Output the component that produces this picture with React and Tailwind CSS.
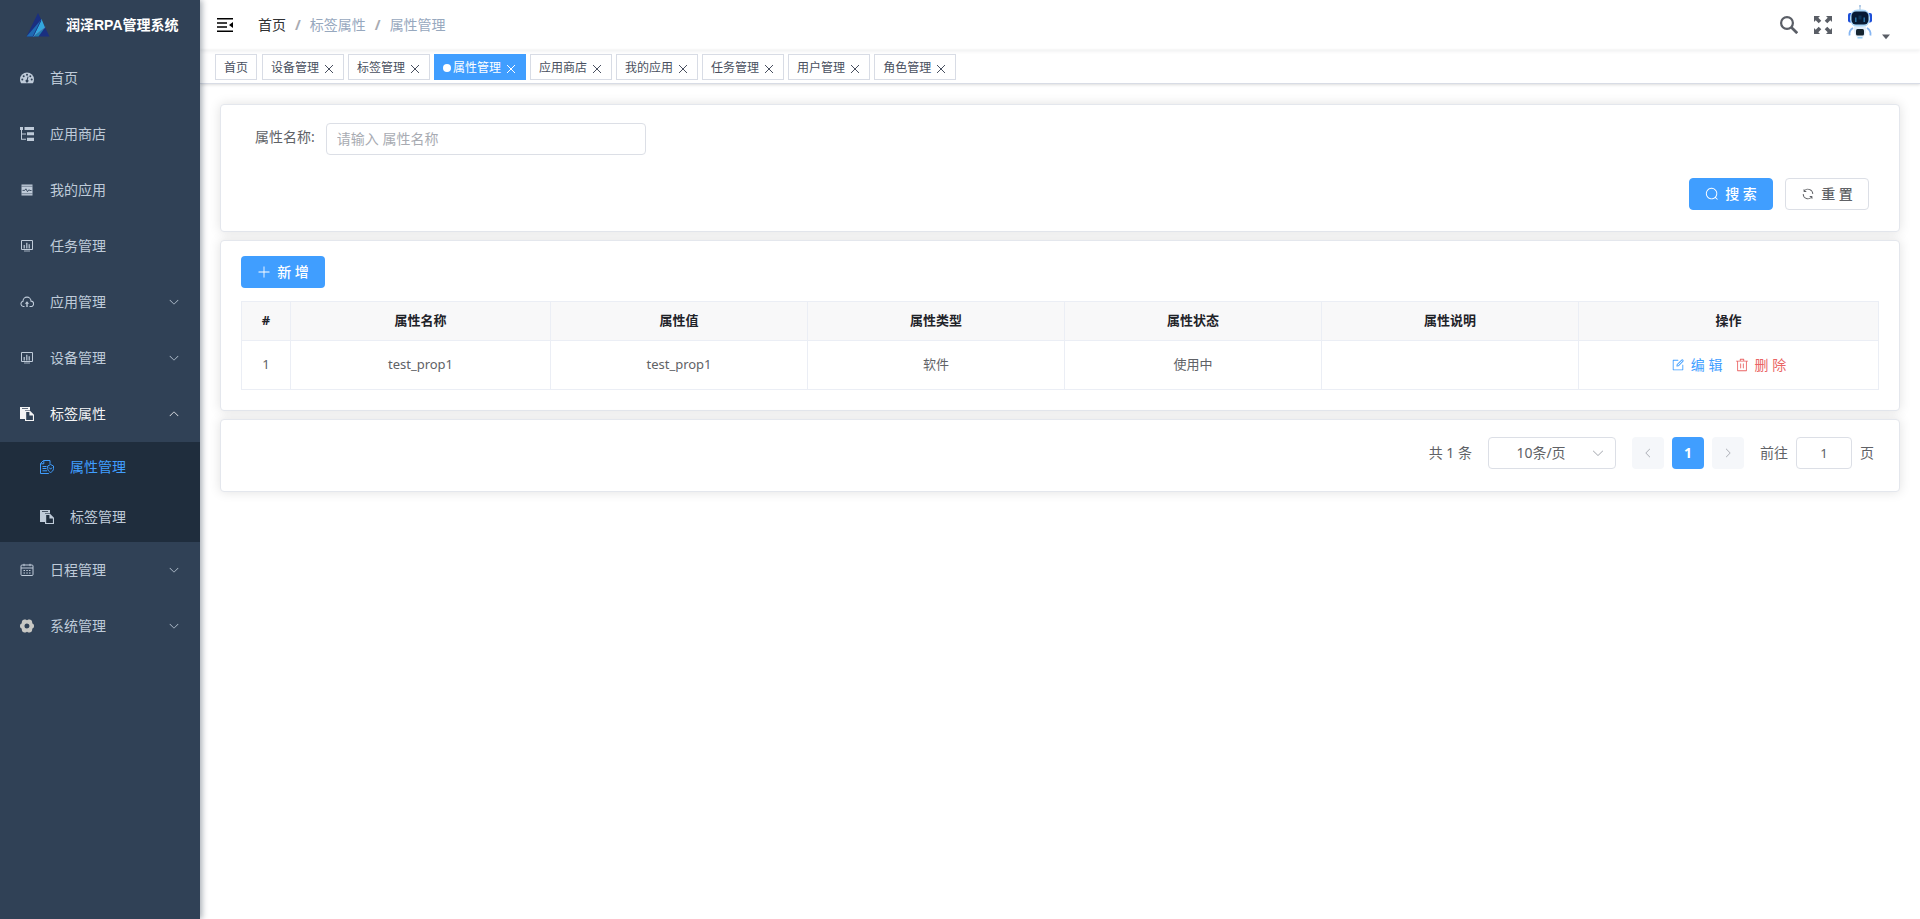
import React from "react";

const BODY = "font-['Noto_Sans','Noto_Sans_CJK_SC',sans-serif]";

function Glyph({ d, className }) {
  return (
    <svg viewBox="0 0 1024 1024" fill="currentColor" className={className} aria-hidden="true">
      {d.map((p) => (
        <path key={p} d={p} />
      ))}
    </svg>
  );
}

const ARROW_DOWN = [
  "M831.872 340.864 512 652.672 192.128 340.864a30.592 30.592 0 0 0-42.752 0 29.12 29.12 0 0 0 0 41.6L489.664 714.24a32 32 0 0 0 44.672 0l340.288-331.712a29.12 29.12 0 0 0 0-41.728 30.592 30.592 0 0 0-42.752 0z",
];
const SEARCH = [
  "m795.904 750.72 124.992 124.928a32 32 0 0 1-45.248 45.248L750.656 795.904a416 416 0 1 1 45.248-45.248zM480 832a352 352 0 1 0 0-704 352 352 0 0 0 0 704z",
];
const REFRESH = [
  "M771.776 794.88A384 384 0 0 1 128 512h64a320 320 0 0 0 555.712 216.448H654.72a32 32 0 1 1 0-64h149.056a32 32 0 0 1 32 32v148.928a32 32 0 1 1-64 0v-50.56zM276.288 295.616h92.992a32 32 0 0 1 0 64H220.16a32 32 0 0 1-32-32V178.56a32 32 0 0 1 64 0v50.56A384 384 0 0 1 896.128 512h-64a320 320 0 0 0-555.776-216.384z",
];
const PLUS = [
  "M480 480V128a32 32 0 0 1 64 0v352h352a32 32 0 1 1 0 64H544v352a32 32 0 1 1-64 0V544H128a32 32 0 0 1 0-64h352z",
];
const TRASH = [
  "M160 256H96a32 32 0 0 1 0-64h256V95.936a32 32 0 0 1 32-32h256a32 32 0 0 1 32 32V192h256a32 32 0 1 1 0 64h-64v672a32 32 0 0 1-32 32H192a32 32 0 0 1-32-32V256zm448-64v-64H416v64h192zM224 896h576V256H224v640zm192-128a32 32 0 0 1-32-32V416a32 32 0 0 1 64 0v320a32 32 0 0 1-32 32zm192 0a32 32 0 0 1-32-32V416a32 32 0 0 1 64 0v320a32 32 0 0 1-32 32z",
];
const EDIT = [
  "M832 512a32 32 0 1 1 64 0v352a32 32 0 0 1-32 32H160a32 32 0 0 1-32-32V160a32 32 0 0 1 32-32h352a32 32 0 0 1 0 64H192v640h640V512z",
  "m469.952 554.24 52.8-7.552L847.104 222.4a32 32 0 1 0-45.248-45.248L477.44 501.44l-7.552 52.8zm422.4-422.4a96 96 0 0 1 0 135.808l-331.84 331.84a32 32 0 0 1-18.112 9.088L436.8 623.68a32 32 0 0 1-36.224-36.224l15.104-105.6a32 32 0 0 1 9.024-18.112l331.904-331.84a96 96 0 0 1 135.744 0z",
];

const icons = {
  dashboard: (
    <svg viewBox="0 0 14 14" className="size-3.5 shrink-0" aria-hidden="true">
      <path d="M0 8.4a7 6.9 0 0 1 14 0c0 1.5-.4 2.800-1.100 3.900H1.100C.4 11.200 0 9.900 0 8.400z" fill="currentColor" />
      <g fill="#304156">
        <circle cx="2.300" cy="8.600" r="1" />
        <circle cx="3.700" cy="5.300" r="1" />
        <circle cx="7" cy="3.700" r="1" />
        <circle cx="10.300" cy="5.300" r="1" />
        <circle cx="11.700" cy="8.600" r="1" />
        <path d="M7.600 5.500l.9.200-.7 3a1.500 1.500 0 1 1-1-.2z" />
      </g>
    </svg>
  ),
  tree: (
    <svg viewBox="0 0 14 14" fill="currentColor" className="size-3.5 shrink-0" aria-hidden="true">
      <path d="M0 0h3v3H2v3.500h4v1H2v4.300h4v1H1V3H0zM4.500 0H14v3H4.500zM7 5.300h7v3H7zM7 10.700h7v3.200H7z" />
    </svg>
  ),
  monitor: (
    <svg viewBox="0 0 14 14" className="size-3.5 shrink-0" aria-hidden="true">
      <path d="M1.500 1.500h11v11h-11z" fill="currentColor" />
      <path d="M1.500 3.300h11M1.500 10.700h11" stroke="#304156" strokeWidth=".5" />
      <path d="M2.500 7.400h2.200l1.200-1.600 1.600 2.900 1.400-2 .9.800h1.700" fill="none" stroke="#304156" strokeWidth=".9" />
    </svg>
  ),
  screen: (
    <svg viewBox="0 0 14 14" className="size-3.5 shrink-0" aria-hidden="true">
      <path d="M1.500 1.500h11v9h-11z" fill="none" stroke="currentColor" strokeWidth="1" />
      <path d="M3.500 6h1.500v3.500H3.500zM6 3.800h1.500v5.700H6zM8.500 5.200H10v4.300H8.500zM4 11.500h6v1H4z" fill="currentColor" opacity=".8" />
    </svg>
  ),
  cloud: (
    <svg viewBox="0 0 14 14" fill="none" stroke="currentColor" strokeWidth="1.100" className="size-3.5 shrink-0" aria-hidden="true">
      <path d="M4.500 11.500H3.300A2.700 2.700 0 0 1 3 6.200a4 4 0 0 1 8-.1 2.700 2.700 0 0 1-.2 5.400H9.500" />
      <path d="M7 12V7.500" strokeWidth="1.400" />
      <path d="M4.900 8.700 7 6.300l2.100 2.400z" fill="currentColor" stroke="none" />
    </svg>
  ),
  copy: (
    <svg viewBox="0 0 14 14" fill="currentColor" className="size-3.5 shrink-0" aria-hidden="true">
      <path fillRule="evenodd" d="M0 0h10v3.200H5V12H0zM2 1v.8h6V1z" />
      <path fillRule="evenodd" d="M5 3.800h5L14 7.800V14H5zm1.200 1.100v8H12.900V8.600H9.400V4.900z" />
    </svg>
  ),
  docCheck: (
    <svg viewBox="0 0 14 14" fill="none" stroke="currentColor" strokeWidth="1" className="size-3.5 shrink-0" aria-hidden="true">
      <path d="M10 3.800V.5H3.500L.5 3.500v10h8.300M3.800.5v3.300H.5M2.500 6.500h4M2.500 8.500h4M2.500 10.800h4.500" />
      <path d="M10.600 4.500 13.500 6v2.600c0 1.800-1.200 3-2.900 3.900-1.700-.9-2.900-2.100-2.900-3.900V6z" />
      <path d="m9.300 7.600 1.300 1.600 1.300-1.600" />
    </svg>
  ),
  calendar: (
    <svg viewBox="0 0 14 14" fill="none" stroke="currentColor" strokeWidth="1" className="size-3.5 shrink-0" aria-hidden="true">
      <rect x="1" y="2" width="12" height="10.500" rx="1" />
      <path d="M1 5h12M4 .8v2.400M10 .8v2.400M3.500 7.500h1.500M6.300 7.500h1.500M9 7.500h1.500M3.500 10h1.500M6.300 10h1.500M9 10h1.500" />
    </svg>
  ),
  gear: (
    <svg viewBox="0 0 14 14" className="size-3.5 shrink-0" aria-hidden="true">
      <path
        fill="#c8c8c4"
        fillRule="evenodd"
        d="M4 .4h1.700L7 1.200 8.300.4H10l1.700 1.100.5 1.500v1.300l1.400.9.400 1.200v1.200l-.4 1.200-1.400.9V11l-.5 1.500-1.700 1.100H8.300L7 12.800l-1.300.8H4l-1.700-1.100L1.800 11V9.700l-1.400-.9L0 7.600V6.400l.4-1.200 1.400-.9V3l.5-1.500zM7 4.500a2.500 2.500 0 1 0 0 5 2.500 2.500 0 0 0 0-5z"
      />
    </svg>
  ),
};

const topMenu = [
  { label: "首页", icon: "dashboard" },
  { label: "应用商店", icon: "tree" },
  { label: "我的应用", icon: "monitor" },
  { label: "任务管理", icon: "screen" },
  { label: "应用管理", icon: "cloud", group: true },
  { label: "设备管理", icon: "screen", group: true },
  {
    label: "标签属性",
    icon: "copy",
    group: true,
    children: [
      { label: "属性管理", icon: "docCheck", active: true },
      { label: "标签管理", icon: "copy" },
    ],
  },
  { label: "日程管理", icon: "calendar", group: true },
  { label: "系统管理", icon: "gear", group: true },
];

function MenuRow({ item }) {
  const row = "flex h-14 w-full items-center gap-4 px-5 text-left text-sm";
  if (!item.group) {
    return (
      <a href="#" className={`${row} text-[#bfcbd9]`}>
        {icons[item.icon]}
        <span>{item.label}</span>
      </a>
    );
  }
  return (
    <button type="button" aria-expanded={Boolean(item.children)} className={`${row} ${item.children ? "text-[#f4f4f5]" : "text-[#bfcbd9]"}`}>
      {icons[item.icon]}
      <span className="flex-1">{item.label}</span>
      <Glyph d={ARROW_DOWN} className={item.children ? "size-3 rotate-180" : "size-3"} />
    </button>
  );
}

function Sidebar() {
  return (
    <aside className="z-10 flex w-[200px] shrink-0 flex-col bg-[#304156] shadow-[2px_0_6px_rgba(0,21,41,0.35)]">
      <a href="#" className="flex h-[50px] items-center gap-4 pl-[26px]">
        <svg viewBox="0 0 24 26" className="h-[26px] w-6" aria-hidden="true">
          <path d="M12 1 23.500 24.500H.5z" fill="#1a2f80" />
          <path d="M14.500 8.500.5 24.500H8z" fill="#1f6bb3" />
          <path d="M15.500 7 19 15.500 7.500 24.500z" fill="#33a8de" />
          <path d="M19 15.500 7.500 24.500h5z" fill="#1f7fb0" />
          <path d="M19.300 15.200 7 24.500" stroke="#5d88b8" strokeWidth=".7" />
          <path d="M15 8.500 7 24.500" stroke="#1b3b87" strokeWidth=".9" />
        </svg>
        <h1 className="font-['Liberation_Sans','Noto_Sans_CJK_SC',sans-serif] text-sm font-bold whitespace-nowrap text-white">润泽RPA管理系统</h1>
      </a>
      <nav>
        <ul>
          {topMenu.map((item) => (
            <li key={item.label}>
              <MenuRow item={item} />
              {item.children && (
                <ul className="bg-[#1f2d3d]">
                  {item.children.map((c) => (
                    <li key={c.label}>
                      <a href="#" className={`flex h-[50px] items-center gap-4 pl-10 text-sm ${c.active ? "text-[#409eff]" : "text-[#bfcbd9]"}`}>
                        {icons[c.icon]}
                        <span>{c.label}</span>
                      </a>
                    </li>
                  ))}
                </ul>
              )}
            </li>
          ))}
        </ul>
      </nav>
    </aside>
  );
}

function Robot() {
  return (
    <svg viewBox="0 0 28 36" className="h-9 w-7" aria-hidden="true">
      <path d="M14 1v5" stroke="#9fb8d4" strokeWidth="1" />
      <circle cx="14" cy="2" r="1" fill="#a9c6e6" />
      <rect x="2" y="9" width="5" height="9.500" rx="2" fill="#1d4fd8" />
      <rect x="21" y="9" width="5" height="9.500" rx="2" fill="#1d4fd8" />
      <rect x="4" y="5.500" width="20" height="17.500" rx="7.500" fill="#a9d6f8" />
      <rect x="5.500" y="7.500" width="17" height="13" rx="4.500" fill="#071a33" />
      <path d="M9.800 13.500v4.500M18.200 13.500v4.500" stroke="#2f80b5" strokeWidth="1.300" />
      <path d="M12.500 11.500h3v4h-3z" fill="#0d3454" />
      <path d="M7 24c-2.700 1.500-3.900 4.500-3.400 7.500M21 24c2.700 1.500 3.900 4.500 3.400 7.500" fill="none" stroke="#86b6f2" strokeWidth="1.800" />
      <path d="M8 22.500h12c1 6-1.500 11.500-6 11.500s-7-5.500-6-11.500z" fill="#e3effb" />
      <rect x="10" y="25" width="8" height="6.500" rx="1.500" fill="#16242e" />
      <path d="M11.500 33.800h5" stroke="#8cc8f2" strokeWidth="1.400" />
    </svg>
  );
}

function Navbar() {
  return (
    <header className="flex h-[50px] items-center pr-[29px] pl-[17px] shadow-[0_1px_4px_rgba(0,21,41,0.08)]">
      <button type="button" aria-label="折叠菜单" className="text-black">
        <svg viewBox="0 0 16 14" className="h-3.5 w-4" fill="currentColor" aria-hidden="true">
          <path d="M0 0h16v1.500H0zM0 4.300h10v1.400H0zM0 8.300h10v1.400H0zM0 12.500h16V14H0zM16 3.900v6.200L12 7z" />
        </svg>
      </button>
      <nav aria-label="breadcrumb" className="ml-[25px] flex-1">
        <ol className="flex items-center text-sm text-[#97a8be]">
          <li>
            <a href="#" className="text-[#303133]">首页</a>
          </li>
          <li className="mx-[9px] font-bold text-[#a8abb2]" aria-hidden="true">/</li>
          <li>标签属性</li>
          <li className="mx-[9px] font-bold text-[#a8abb2]" aria-hidden="true">/</li>
          <li>属性管理</li>
        </ol>
      </nav>
      <div className="flex items-center text-[#5a5e66]">
        <button type="button" aria-label="搜索菜单" className="mr-4">
          <svg viewBox="0 0 18 18" className="size-[18px]" fill="none" stroke="currentColor" aria-hidden="true">
            <circle cx="7" cy="7" r="5.900" strokeWidth="2.200" />
            <path d="m11.500 11.500 5.700 5.700" strokeWidth="2.700" />
          </svg>
        </button>
        <button type="button" aria-label="全屏" className="mr-3.5">
          <svg viewBox="0 0 18 18" className="size-[18px]" fill="currentColor" aria-hidden="true">
            <path d="M0 0h6L4.300 1.700 7.300 4.700 4.700 7.300 1.700 4.300 0 6zM18 0v6l-1.700-1.700-3 3-2.600-2.600 3-3L12 0zM0 18v-6l1.700 1.700 3-3 2.600 2.600-3 3L6 18zM18 18h-6l1.700-1.700-3-3 2.600-2.600 3 3L18 12z" />
          </svg>
        </button>
        <button type="button" aria-label="用户菜单" className="flex items-end gap-[7px] pb-1.5">
          <Robot />
          <svg viewBox="0 0 10 6" className="h-1.5 w-2.5" fill="currentColor" aria-hidden="true">
            <path d="M1 .5h8L5 5.300z" />
          </svg>
        </button>
      </div>
    </header>
  );
}

const tags = ["首页", "设备管理", "标签管理", "属性管理", "应用商店", "我的应用", "任务管理", "用户管理", "角色管理"];

function TagsBar() {
  return (
    <nav aria-label="已打开页面" className="flex h-[34px] items-center gap-1 border-b border-[#d8dce5] pl-[15px] shadow-[0_1px_3px_rgba(0,0,0,0.12),0_0_3px_rgba(0,0,0,0.04)]">
      {tags.map((t, i) => {
        const active = t === "属性管理";
        return (
          <span
            key={t}
            className={`flex h-[26px] items-center border px-2 pt-0.5 text-xs first:mr-px ${active ? "border-[#409eff] bg-[#409eff] text-white" : "border-[#d8dce5] text-[#495060]"}`}
          >
            {active && <i className="mr-0.5 size-2 rounded-full bg-white" />}
            <a href="#">{t}</a>
            {i > 0 && (
              <button type="button" aria-label={`关闭${t}`} className="ml-1 pt-0.5">
                <svg viewBox="0 0 12 12" className="size-3" fill="none" stroke="currentColor" strokeWidth="1" aria-hidden="true">
                  <path d="m2 2 8 8M10 2l-8 8" />
                </svg>
              </button>
            )}
          </span>
        );
      })}
    </nav>
  );
}

const CARD = "rounded border border-[#e4e7ed] bg-white shadow-[0_0_12px_rgba(0,0,0,0.12)]";

function SearchCard() {
  return (
    <section className={`${CARD} pt-[18px] pr-[30px] pb-[21px] pl-[34px] text-[#606266]`}>
      <form onSubmit={(e) => e.preventDefault()}>
        <div className="flex gap-[11px]">
          <label htmlFor="prop-name" className="h-7 text-sm leading-7">属性名称:</label>
          <input
            id="prop-name"
            type="text"
            placeholder="请输入 属性名称"
            className="h-8 w-80 rounded border border-[#dcdfe6] px-2.5 pb-0.5 text-sm outline-none placeholder:text-[#a8abb2]"
          />
        </div>
        <div className="mt-[23px] flex justify-end gap-3">
          <button type="submit" className="flex h-8 min-w-21 items-center justify-center gap-1.5 rounded border border-[#409eff] bg-[#409eff] px-[15px] text-sm font-medium text-white">
            <Glyph d={SEARCH} className="size-3.5" />
            搜 索
          </button>
          <button type="reset" className="flex h-8 min-w-21 items-center justify-center gap-1.5 rounded border border-[#dcdfe6] bg-white px-[15px] text-sm font-medium">
            <Glyph d={REFRESH} className="size-3.5" />
            重 置
          </button>
        </div>
      </form>
    </section>
  );
}

const headers = ["#", "属性名称", "属性值", "属性类型", "属性状态", "属性说明", "操作"];
const rows = [["1", "test_prop1", "test_prop1", "软件", "使用中", ""]];

function TableCard() {
  return (
    <section className={`${CARD} px-5 pt-[15px] pb-5`}>
      <button type="button" className="flex h-8 min-w-21 items-center justify-center gap-1.5 rounded bg-[#409eff] px-[15px] text-sm font-medium text-white">
        <Glyph d={PLUS} className="size-3.5" />
        新 增
      </button>
      <table className="mt-[13px] w-full table-fixed border-collapse text-center text-[13px] text-[#606266]">
        <colgroup>
          <col className="w-[49px]" />
          <col className="w-[260px]" />
          <col />
          <col />
          <col />
          <col />
          <col className="w-[300px]" />
        </colgroup>
        <thead>
          <tr className="h-[39px] bg-[#f8f8f9] text-[#1f2329]">
            {headers.map((h) => (
              <th key={h} scope="col" className="border border-[#ebeef5] font-bold">{h}</th>
            ))}
          </tr>
        </thead>
        <tbody>
          {rows.map((r) => (
            <tr key={r[0]} className="h-[49px]">
              {r.map((c, i) => (
                <td key={i} className="border border-[#ebeef5]">{c}</td>
              ))}
              <td className="border border-[#ebeef5]">
                <div className="flex justify-center gap-3 text-sm">
                  <button type="button" className="flex items-center gap-1.5 text-[#409eff]">
                    <Glyph d={EDIT} className="size-3.5" />
                    编 辑
                  </button>
                  <button type="button" className="flex items-center gap-1.5 text-[#ea6464]">
                    <Glyph d={TRASH} className="size-3.5" />
                    删 除
                  </button>
                </div>
              </td>
            </tr>
          ))}
        </tbody>
      </table>
    </section>
  );
}

function Pagination() {
  return (
    <section className={`${CARD} flex items-center justify-end pt-[17px] pr-[25px] pb-[22px] text-sm text-[#606266]`}>
      <span className="mr-4">共 1 条</span>
      <div className="relative mr-4">
        <select aria-label="每页条数" className="h-8 w-32 appearance-none rounded border border-[#dcdfe6] bg-white pr-[34px] pl-3 text-center [text-align-last:center]">
          <option>10条/页</option>
          <option>20条/页</option>
          <option>50条/页</option>
        </select>
        <Glyph d={ARROW_DOWN} className="pointer-events-none absolute top-[9px] right-[11px] size-3.5 text-[#a8abb2]" />
      </div>
      <div className="flex gap-2">
        <button type="button" aria-label="上一页" disabled className="grid size-8 place-items-center rounded-sm bg-[#f5f7fa] text-[#a8abb2]">
          <Glyph d={ARROW_DOWN} className="size-3 rotate-90" />
        </button>
        <button type="button" aria-current="page" className="size-8 rounded-sm bg-[#409eff] font-bold text-white">1</button>
        <button type="button" aria-label="下一页" disabled className="grid size-8 place-items-center rounded-sm bg-[#f5f7fa] text-[#a8abb2]">
          <Glyph d={ARROW_DOWN} className="size-3 -rotate-90" />
        </button>
      </div>
      <label htmlFor="page-no" className="mr-2 ml-4">前往</label>
      <input id="page-no" type="text" defaultValue="1" className="mr-2 h-8 w-14 rounded border border-[#dcdfe6] text-center text-[13px] outline-none" />
      <span>页</span>
    </section>
  );
}

export default function App() {
  return (
    <div className={`flex min-h-screen bg-white ${BODY}`}>
      <Sidebar />
      <div className="flex min-w-0 flex-1 flex-col">
        <Navbar />
        <TagsBar />
        <main className="flex flex-col gap-2 p-5">
          <SearchCard />
          <TableCard />
          <Pagination />
        </main>
      </div>
    </div>
  );
}
